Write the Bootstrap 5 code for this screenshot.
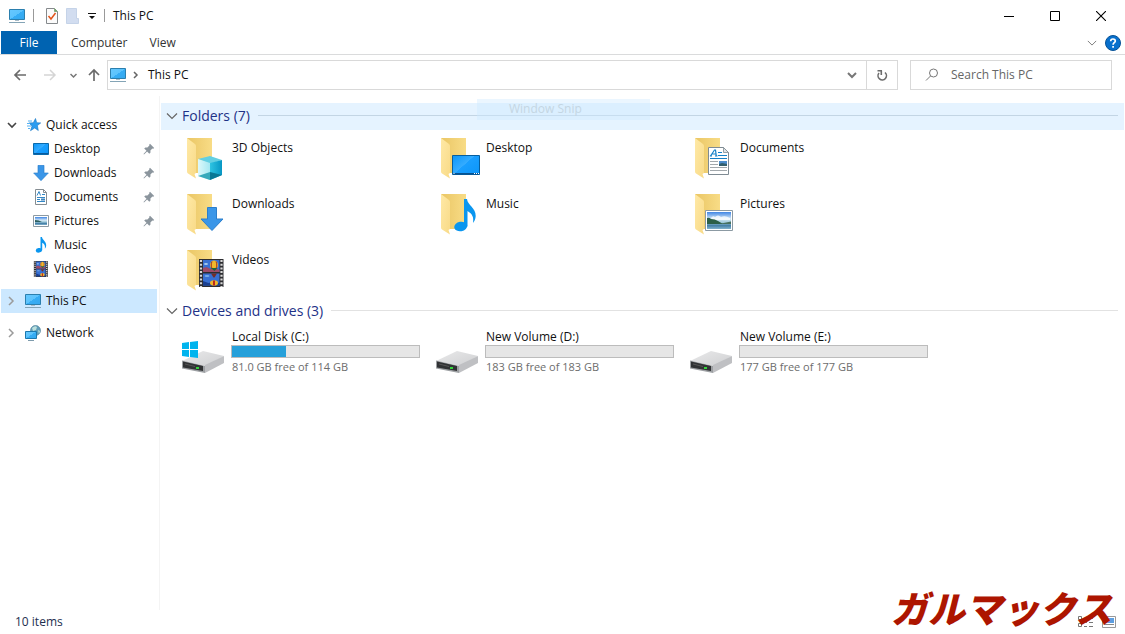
<!DOCTYPE html>
<html lang="en">
<head>
<meta charset="utf-8">
<meta name="viewport" content="width=device-width, initial-scale=1">
<title>This PC</title>
<link href="https://cdn.jsdelivr.net/npm/bootstrap@5.3.0/dist/css/bootstrap.min.css" rel="stylesheet">
<style>
body{font:12px/16px "Open Sans","Noto Sans",sans-serif;color:#111;background:#fff}
button{background:none;border:0;padding:0;color:inherit}
a{color:inherit;text-decoration:none}
svg{display:block;flex:none}
.titlebar{height:31px;padding-left:9px;padding-right:1px}
.rule{width:1px;height:13px;background:#999}
.winbtn{width:46px;height:30px;display:flex;align-items:center;justify-content:center}
.ribbon{height:24px;padding:0 4px 0 1px;border-bottom:1px solid #dadbdc;color:#333}
.ribbon .tab{height:23px}
.tab-file{width:56px;background:#0063b1;color:#fff}
.tab-wide{padding:0 14px}
.navrow{height:41px;padding:5px 13px 6px 0}
.navbtn{display:flex;align-items:center;justify-content:center}
.nav-back{width:40px}
.nav-fwd{width:20px}
.nav-recent{width:26px}
.nav-up{width:16px;margin-right:5px}
.nav-refresh{width:31px}
.boxed{border:1px solid #d9d9d9;height:30px}
.address{padding-left:2px}
.searchbox{width:202px;margin-left:12px;padding-left:14px}
.searchbox input{border:0;outline:0;width:140px;margin-left:12px;padding:0;color:#555;background:none}
.searchbox input::placeholder{color:#666;opacity:1}
.sidebar{width:160px;padding:17px 2px 0 1px;border-right:1px solid #f4f4f4}
.tree-row{height:24px;width:156px;padding-left:5px;display:flex;align-items:center}
.tree-row.top{gap:5px}
.tree-row.sub{padding-left:32px;gap:5px;padding-right:2px}
.tree-row.active{background:#cce8ff}
.content{padding:7px 1px 0 1px}
.grouphead{height:27px;padding:0 6px 2px 5px;color:#1e3287}
.grouphead h2{font-size:14px;line-height:20px;font-weight:400;margin:0 8px 0 4px}
.grouphead .line{height:1px;background:#e2e2e2}
.grouphead.hot{background:#e5f3ff}
.grouphead.hot .line{background:#c3d5e4}
.tiles{display:grid;grid-template-columns:repeat(auto-fill,254px);padding-left:18px}
.tile{display:flex;gap:5px;height:56px}
.tile.folder{padding-top:8px}
.tile.folder span{line-height:20px}
.tile.volume{padding-top:1px}
.drive-info{width:189px;padding-top:2px}
.drive-info .label{line-height:17px}
.drive-info .free{font-size:11px;line-height:18px;color:#6d6d6d}
.capacity{height:13px;border-radius:0;border:1px solid #bcbcbc;background:#e6e6e6;margin:0 1px 0 -1px}
.capacity .progress-bar{background:#26a0da}
.statusbar{height:24px;padding:0 9px 0 15px;color:#1e2f50}
.ghost{left:477px;top:99px;width:173px;height:21px;padding-left:32px;line-height:20px;background:#cce8ff66;color:#c4d6e3;pointer-events:none}
.brand{right:13px;bottom:0;font:italic 900 37px/54px "Noto Sans CJK JP",sans-serif;color:#ad1500;white-space:nowrap;pointer-events:none}
</style>
<script src="https://cdn.jsdelivr.net/npm/bootstrap@5.3.0/dist/js/bootstrap.bundle.min.js"></script>
</head>
<body class="min-vh-100 d-flex flex-column position-relative">
<svg width="0" height="0" class="position-absolute" aria-hidden="true">
<defs>
<linearGradient id="gScreen" x2="1" y2="1"><stop stop-color="#66c8ff"/><stop offset=".5" stop-color="#5cc3fc"/><stop offset=".5" stop-color="#36adf5"/><stop offset="1" stop-color="#35a8ee"/></linearGradient>
<linearGradient id="gDesk" x2="1" y2=".8"><stop stop-color="#0a95f8"/><stop offset=".5" stop-color="#35acff"/><stop offset=".51" stop-color="#1a9fff"/><stop offset="1" stop-color="#0e97fa"/></linearGradient>
<linearGradient id="gBack2" x2="1" y2="0"><stop stop-color="#eac665"/><stop offset="1" stop-color="#f8dc86"/></linearGradient>
<linearGradient id="gFlap" x2="1" y2="1"><stop stop-color="#ffe9a6"/><stop offset="1" stop-color="#f8da87"/></linearGradient>
<linearGradient id="gSky" x2="0" y2="1"><stop stop-color="#3f85e4"/><stop offset=".4" stop-color="#d5e9f7"/><stop offset=".62" stop-color="#9cc7d8"/><stop offset=".8" stop-color="#447fa6"/><stop offset="1" stop-color="#82b3ce"/></linearGradient>
<linearGradient id="gTop" x2="1" y2="1"><stop stop-color="#e9e9ea"/><stop offset="1" stop-color="#cfd0d2"/></linearGradient>
<linearGradient id="gCubeL" x2="1" y2="0"><stop stop-color="#ddf8fa"/><stop offset="1" stop-color="#a5e8f2"/></linearGradient>
<linearGradient id="gCubeR" x2="1" y2="0"><stop stop-color="#2fc4e2"/><stop offset="1" stop-color="#0797c4"/></linearGradient>
<symbol id="pc" viewBox="0 0 16 16"><path d="M.5 1.5h15v10H.5z" fill="url(#gScreen)" stroke="#2b7fae"/><path d="M6 12h4v1H6z" fill="#a9bcc8"/><path d="M0 14h16v1H0z" fill="#84a4b6"/></symbol>
<symbol id="folder" viewBox="0 0 48 44"><path d="M8 0h25v35H15z" fill="url(#gBack2)"/><path d="M8 0l8 6q1 1 1 2v27l-1.500 1 1.500 4.500-8-5q-1-.5-1-2z" fill="url(#gFlap)"/></symbol>
<symbol id="picture" viewBox="0 0 28 21"><path d="M.5.500h27v20H.500z" fill="#fff" stroke="#8c9aa3"/><path d="M2 2h24v17H2z" fill="url(#gSky)"/><path d="M6 8q2-3 4-1 3-3 6 0 4-2 9 1v2H8z" fill="#fff" opacity=".75"/><path d="M2 8q2-1 4 1 4 0 7 2l5 3H2z" fill="#2c5f47"/><path d="M14 14l12-2.500V14z" fill="#47705f"/></symbol>
<symbol id="film" viewBox="0 0 25 28"><path d="M0 0h24.500v28H0z" fill="#2d2d31"/><path d="M2 1v27M22.500 1v27" stroke="#d8d8d8" stroke-width="2.200" stroke-dasharray="2 1.700"/><path d="M4 1h16.500v12H4zM4 14.500h16.500v12H4z" fill="#3870d2"/><path d="M4 9l3.500-1 4 2 4-1 5 2v2H4z" fill="#9c4b68"/><path d="M4 22l5.500 2 4-1 7 1v2.500H4z" fill="#193f91"/><ellipse cx="15" cy="6" rx="4" ry="4.500" fill="#f0b92c"/><path d="M13 2.500c-1 2-1 5 0 7M17 2.500c1 2 1 5 0 7" fill="none" stroke="#a33422"/><path d="M11.500 9h7l-3 3z" fill="#21613a"/><ellipse cx="15" cy="24" rx="4" ry="2.800" fill="#eeb52c"/><path d="M14 21.500h2v5h-2z" fill="#bd291f"/><path d="M12 14.500h6l-2.500 4h-1z" fill="#762e26"/><ellipse cx="7" cy="5" rx="2" ry="1" fill="#a8cced"/><ellipse cx="8" cy="17" rx="2.500" ry="1" fill="#79aee8"/></symbol>
<symbol id="doc" viewBox="0 0 21 28"><path d="M.500.500h15l5 5v22H.500z" fill="#fff" stroke="#7f8b93"/><path d="M15.500.500v5h5z" fill="#e1e5e7" stroke="#7f8b93" stroke-width=".8"/><path d="M2.500 9L6.500 3h1l.8 6M4 7h4M1.800 9h2.200M7 9h2.500" fill="none" stroke="#1581c7" stroke-width="1.200"/><path d="M10 5.500h4M10 8.500h9M2 11.500h17" stroke="#1581c7"/><path d="M2 14.500h8M2 17.500h8M2 20.500h17M2 23.500h17" stroke="#a2a8ac"/><path d="M11 14h8v5h-8z" fill="#4c8ccc"/><path d="M11 17l3-1 5 1v2h-8z" fill="#335f6d"/></symbol>
<symbol id="note" viewBox="0 0 22 33"><ellipse cx="6.700" cy="27.500" rx="6.500" ry="4.700" transform="rotate(-10 6.700 27.500)" fill="#0a96ef"/><path d="M10 0h3c.5 6 9 9 8.700 17-.1 3-1.200 5-2.700 7 .8-6-.5-9-5.500-12v15.500H10z" fill="#0a96ef"/></symbol>
<symbol id="arrow" viewBox="0 0 24 24"><path d="M7.500.500h9V12H23L12 23.500 1 12h6.500z" fill="#3a96e8" stroke="#2b7ecb"/></symbol>
<symbol id="desk" viewBox="0 0 28 20"><path d="M.500.500h27v19H.500z" fill="url(#gDesk)" stroke="#065e9e"/><path d="M1 18h26v1.500H1z" fill="#065291"/><path d="M1.500 18.500h1M22 18.500h1M24 18.500h1M26 18.500h1" stroke="#fff"/></symbol>
<symbol id="drive" viewBox="0 0 48 48"><path d="M3 35L24 25l21 5-19 10z" fill="url(#gTop)"/><path d="M26 39l19-9v7L26 47z" fill="#bfc0c3"/><path d="M3 34.500L26 40v7L3 42.500z" fill="#9c9fa2"/><path d="M4 35.500l20 4.500v5L4 41.500z" fill="#303234"/><path d="M6 38l10 2.500" stroke="#555"/><path d="M17 41h3v2h-3z" fill="#35d33c"/></symbol>
<symbol id="pin" viewBox="0 0 12 12"><path d="M7 .8l4.200 4.200-1 .8-.8-.2-2 2 .1 2-1.200 1.200-2.200-2.200L1 11.500l-.5-.5 3-3.200-2.300-2.300 1.200-1.100 2 .1 2-2-.2-.8z" fill="#8b959d"/></symbol>
<symbol id="cr" viewBox="0 0 10 10"><path d="M3 1l4 4-4 4" fill="none" stroke="#9b9b9b" stroke-width="1.500"/></symbol>
<symbol id="cd" viewBox="0 0 12 12"><path d="M1 3.500l5 5 5-5" fill="none" stroke="currentColor" stroke-width="1.200"/></symbol>
</defs></svg>

<header>
<div class="titlebar d-flex align-items-center">
<svg width="16" height="16"><use href="#pc"/></svg>
<span class="rule mx-2"></span>
<div class="d-flex align-items-center gap-2 ms-1 me-2">
<button aria-label="Properties"><svg width="12" height="16" viewBox="0 0 12 16"><path d="M.5.500h8l3 3v12H.500z" fill="#fbfbfb" stroke="#85898c"/><path d="M8.500.500v3h3" fill="#6eab67" stroke="#85a981"/><path d="M2.500 8l2.500 3 4.500-6" fill="none" stroke="#e2541a" stroke-width="1.500"/></svg></button>
<button aria-label="New folder"><svg width="14" height="16" viewBox="0 0 14 16"><path d="M.500.500h10v10h2v5H.500z" fill="#d2ddf0" stroke="#c5d3e8"/></svg></button>
<button aria-label="Customize toolbar"><svg width="8" height="8" viewBox="0 0 8 8"><path d="M0 1h8v1H0zM1 4h6L4 7z" fill="#111"/></svg></button>
</div>
<span class="rule me-2"></span>
<span>This PC</span>
<div class="ms-auto d-flex">
<button class="winbtn" aria-label="Minimize"><svg width="10" height="10"><path d="M0 5.500h10" stroke="#000"/></svg></button>
<button class="winbtn" aria-label="Maximize"><svg width="10" height="10"><path d="M.500.500h9v9h-9z" fill="none" stroke="#000"/></svg></button>
<button class="winbtn" aria-label="Close"><svg width="10" height="10"><path d="M0 0l10 10M10 0L0 10" stroke="#000" stroke-width="1.100"/></svg></button>
</div></div>
<div class="ribbon d-flex">
<button class="tab tab-file">File</button><button class="tab tab-wide">Computer</button><button class="tab px-2">View</button>
<div class="ms-auto d-flex align-items-center gap-2"><button class="text-black-50" aria-label="Expand ribbon"><svg width="10" height="10"><use href="#cd"/></svg></button>
<button aria-label="Help"><svg width="16" height="16" viewBox="0 0 16 16"><circle cx="8" cy="8" r="7.500" fill="#0870cd" stroke="#075297"/><path d="M5.700 6.200C5.700 3.300 10.300 3.300 10.300 6c0 1.600-2.200 1.900-2.200 3.700M8.100 11v1.800" fill="none" stroke="#fff" stroke-width="1.700"/></svg></button></div>
</div>
<nav class="navrow d-flex" aria-label="Location">
<button class="navbtn nav-back" aria-label="Back"><svg width="14" height="12" viewBox="0 0 14 12"><path d="M13 6H2M7 1L2 6l5 5" fill="none" stroke="#6b6b6b" stroke-width="1.700"/></svg></button>
<button class="navbtn nav-fwd" aria-label="Forward"><svg width="14" height="12" viewBox="0 0 14 12"><path d="M1 6h11M7 1l5 5-5 5" fill="none" stroke="#d5d5d5" stroke-width="1.500"/></svg></button>
<button class="navbtn nav-recent" aria-label="Recent locations"><svg width="7" height="7" viewBox="0 0 7 7"><path d="M.500 2l3 3 3-3" fill="none" stroke="#777" stroke-width="1.500"/></svg></button>
<button class="navbtn nav-up" aria-label="Up"><svg width="12" height="14" viewBox="0 0 12 14"><path d="M6 13V2M1 7l5-5 5 5" fill="none" stroke="#6b6b6b" stroke-width="1.700"/></svg></button>
<div class="boxed address flex-grow-1 d-flex align-items-center"><svg width="16" height="16"><use href="#pc"/></svg><svg class="ms-1" width="10" height="8" viewBox="0 0 10 8"><path d="M4 1l3 3-3 3" fill="none" stroke="#666" stroke-width="1.500"/></svg><a href="#" class="ms-2">This PC</a>
<button class="ms-auto me-2" aria-label="Previous locations"><svg width="12" height="12" viewBox="0 0 12 12"><path d="M2 4l4 4 4-4" fill="none" stroke="#777" stroke-width="2"/></svg></button></div>
<button class="boxed navbtn nav-refresh border-start-0" aria-label="Refresh"><svg width="12" height="12" viewBox="0 0 12 12"><path d="M9 3.500A4.200 4.200 0 1 1 3 4M1.500 1.800H6M5.300 1.800V6" fill="none" stroke="#6d6d6d" stroke-width="1.600"/></svg></button>
<label class="searchbox boxed d-flex align-items-center"><svg width="14" height="14" viewBox="0 0 14 14"><circle cx="8.500" cy="5" r="4" fill="none" stroke="#777"/><path d="M5.500 8L1 12.500" stroke="#777"/></svg><input type="search" aria-label="Search This PC" placeholder="Search This PC"></label>
</nav>
</header>

<div class="d-flex flex-grow-1">
<aside class="sidebar flex-shrink-0">
<a href="#" class="tree-row top"><svg width="12" height="12" viewBox="0 0 12 12"><path d="M2 4l4 4 4-4" fill="none" stroke="#444" stroke-width="1.600"/></svg><svg class="ms-1" width="14" height="14" viewBox="0 0 14 14"><path d="M8.500.500l1.200 4.200 4 .2-3.300 2.700.9 4.900-3.600-2.500-4.200 2.700 1.500-4.600-3-3.200 4.300-.1z" fill="#2b9cf0" stroke="#1b79c4" stroke-width=".6"/><path d="M1 3h4M0 5.500h3M0 8h4M1 10.500h2" stroke="#57b1f2"/></svg>Quick access</a>
<a href="#" class="tree-row sub"><svg width="16" height="12" viewBox="0 0 16 12"><path d="M.500.500h15v11H.500z" fill="url(#gDesk)" stroke="#0b6aab"/><path d="M1 10.500h14" stroke="#075a9e"/></svg>Desktop<svg class="ms-auto" width="12" height="12"><use href="#pin"/></svg></a>
<a href="#" class="tree-row sub"><svg width="16" height="16"><use href="#arrow"/></svg>Downloads<svg class="ms-auto" width="12" height="12"><use href="#pin"/></svg></a>
<a href="#" class="tree-row sub"><svg width="16" height="16" viewBox="0 0 16 16"><path d="M2.500.500h8l3 3v12h-11z" fill="#fff" stroke="#858d92"/><path d="M10.500.500v3h3" fill="none" stroke="#858d92"/><path d="M4 6.500l2-4 1.500 4M9 5.500h3M4 8.500h8M4 10.500h3M4 12.500h8" fill="none" stroke="#3387c5"/><path d="M8 9.500h4v2H8z" fill="#3e85be"/></svg>Documents<svg class="ms-auto" width="12" height="12"><use href="#pin"/></svg></a>
<a href="#" class="tree-row sub"><svg width="16" height="12" viewBox="0 0 16 12"><path d="M.500.500h15v11H.500z" fill="#fff" stroke="#8c9aa3"/><path d="M2 2h12v8H2z" fill="url(#gSky)"/><path d="M2 5q4 0 7 2H2z" fill="#2c5f60"/></svg>Pictures<svg class="ms-auto" width="12" height="12"><use href="#pin"/></svg></a>
<a href="#" class="tree-row sub"><svg width="16" height="16"><use href="#note"/></svg>Music</a>
<a href="#" class="tree-row sub"><svg width="16" height="16"><use href="#film"/></svg>Videos</a>
<a href="#" class="tree-row top active mt-2"><svg width="10" height="10"><use href="#cr"/></svg><svg class="ms-1" width="16" height="16"><use href="#pc"/></svg>This PC</a>
<a href="#" class="tree-row top mt-2"><svg width="10" height="10"><use href="#cr"/></svg><svg class="ms-1" width="16" height="16" viewBox="0 0 16 16"><circle cx="10.500" cy="5.500" r="5" fill="#629fb9" stroke="#477b93" stroke-width=".6"/><path d="M7 3q3-3 5-1l-1 3-3 1zM13 5l2 1-1 3z" fill="#bce0dd"/><path d="M.500 6.500h11v7H.500z" fill="url(#gScreen)" stroke="#1b78ae"/><path d="M3 15.500h6" stroke="#7e9bac"/></svg>Network</a>
</aside>
<main class="content flex-grow-1">
<div class="grouphead hot d-flex align-items-center"><svg width="12" height="12" color="#666"><use href="#cd"/></svg><h2>Folders (7)</h2><span class="line flex-grow-1"></span></div>
<div class="tiles">
<a href="#" class="tile folder"><svg width="48" height="44" viewBox="0 0 48 44"><use href="#folder"/><path d="M19 21l12-3 12 4-12 4z" fill="#62cfe2"/><path d="M19 21l12 4v17l-12-4z" fill="url(#gCubeL)"/><path d="M31 25l12-3v15l-12 5z" fill="url(#gCubeR)"/><path d="M19 38l12-4v8z" fill="#38a9bb"/><path d="M31 34l12 3-12 5z" fill="#087795"/></svg><span>3D Objects</span></a>
<a href="#" class="tile folder"><svg width="48" height="44" viewBox="0 0 48 44"><use href="#folder"/><use href="#desk" x="19" y="17" width="28" height="20"/></svg><span>Desktop</span></a>
<a href="#" class="tile folder"><svg width="48" height="44" viewBox="0 0 48 44"><use href="#folder"/><use href="#doc" x="21" y="9" width="21" height="28"/></svg><span>Documents</span></a>
<a href="#" class="tile folder"><svg width="48" height="44" viewBox="0 0 48 44"><use href="#folder"/><use href="#arrow" x="21" y="13" width="24" height="24"/></svg><span>Downloads</span></a>
<a href="#" class="tile folder"><svg width="48" height="44" viewBox="0 0 48 44"><use href="#folder"/><use href="#note" x="21" y="5" width="22" height="33"/></svg><span>Music</span></a>
<a href="#" class="tile folder"><svg width="48" height="44" viewBox="0 0 48 44"><use href="#folder"/><use href="#picture" x="18" y="16" width="28" height="21"/></svg><span>Pictures</span></a>
<a href="#" class="tile folder"><svg width="48" height="44" viewBox="0 0 48 44"><use href="#folder"/><use href="#film" x="20" y="9" width="25" height="28"/></svg><span>Videos</span></a>
</div>
<div class="grouphead d-flex align-items-center"><svg width="12" height="12" color="#666"><use href="#cd"/></svg><h2>Devices and drives (3)</h2><span class="line flex-grow-1"></span></div>
<div class="tiles">
<a href="#" class="tile volume"><svg width="48" height="48" viewBox="0 0 48 48"><use href="#drive"/><path d="M3 17l7-1v7H3zM11 16l8-1v8h-8zM3 24h7v7l-7-1zM11 24h8v8l-8-1z" fill="#00b4ee"/></svg><div class="drive-info"><div class="label">Local Disk (C:)</div><div class="progress capacity" role="progressbar" aria-label="Used space on C" aria-valuenow="29"><div class="progress-bar" style="width:29%"></div></div><div class="free">81.0 GB free of 114 GB</div></div></a>
<a href="#" class="tile volume"><svg width="48" height="48"><use href="#drive"/></svg><div class="drive-info"><div class="label">New Volume (D:)</div><div class="progress capacity" role="progressbar" aria-label="Used space on D" aria-valuenow="0"></div><div class="free">183 GB free of 183 GB</div></div></a>
<a href="#" class="tile volume"><svg width="48" height="48"><use href="#drive"/></svg><div class="drive-info"><div class="label">New Volume (E:)</div><div class="progress capacity" role="progressbar" aria-label="Used space on E" aria-valuenow="0"></div><div class="free">177 GB free of 177 GB</div></div></a>
</div>
</main>
</div>
<footer class="statusbar d-flex align-items-center"><span>10 items</span>
<div class="ms-auto d-flex gap-2"><button aria-label="Details view"><svg width="16" height="12"><path d="M.500.500h3v3h-3zM.500 7.500h3v3h-3zM6 2.500h3M11 2.500h4M6 6.500h3M11 6.500h4M6 10.500h3M11 10.500h4" fill="none" stroke="#777"/></svg></button><button aria-label="Large icons view"><svg width="14" height="12"><path d="M.500.500h13v11H.500z" fill="#fff" stroke="#999"/><path d="M2 2h10v5H2z" fill="#5d9fe0"/><path d="M2 8.500h10" stroke="#888"/></svg></button></div></footer>
<div class="ghost position-absolute">Window Snip</div>
<div class="brand position-absolute" lang="ja">ガルマックス</div>
</body>
</html>
